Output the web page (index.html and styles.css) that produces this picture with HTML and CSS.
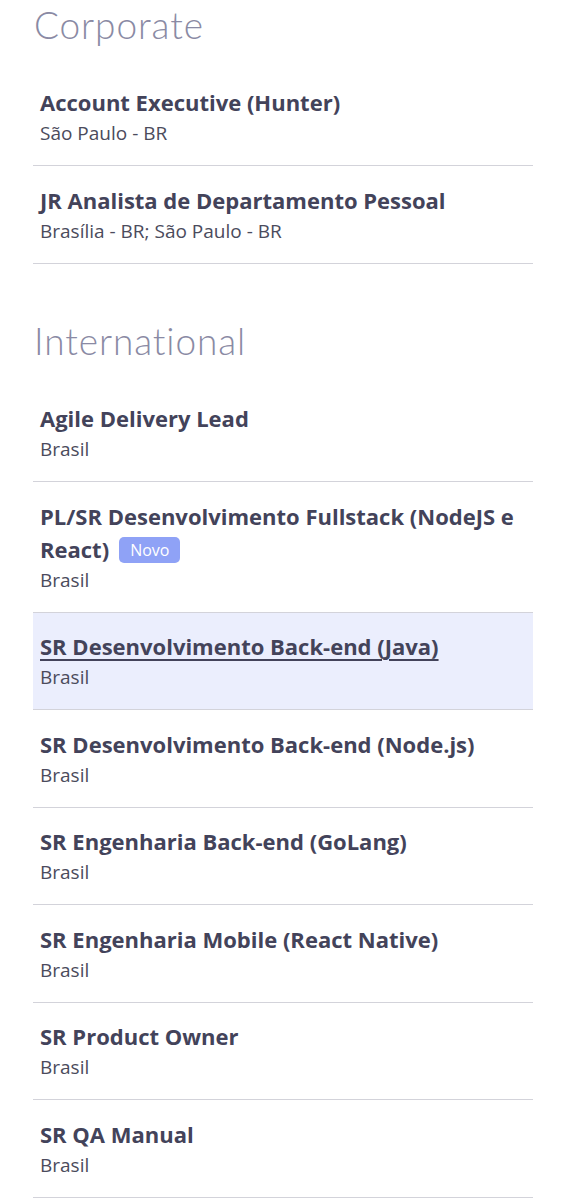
FILE: index.html
```html
<!DOCTYPE html>
<html lang="pt-BR">
<head>
<meta charset="utf-8">
<link rel="stylesheet" href="styles.css">
</head>
<body>
<main class="page">
  <section class="dept">
    <h2 class="dept-title">Corporate</h2>
    <ul class="jobs">
      <li class="job"><a class="job-title" href="#">Account Executive (Hunter)</a><span class="job-loc">São Paulo - BR</span></li>
      <li class="job"><a class="job-title" href="#">JR Analista de Departamento Pessoal</a><span class="job-loc">Brasília - BR; São Paulo - BR</span></li>
    </ul>
  </section>
  <section class="dept">
    <h2 class="dept-title">International</h2>
    <ul class="jobs">
      <li class="job"><a class="job-title" href="#">Agile Delivery Lead</a><span class="job-loc">Brasil</span></li>
      <li class="job"><a class="job-title" href="#">PL/SR Desenvolvimento Fullstack (NodeJS e React)<span class="badge">Novo</span></a><span class="job-loc">Brasil</span></li>
      <li class="job active"><a class="job-title" href="#">SR Desenvolvimento Back-end (Java)</a><span class="job-loc">Brasil</span></li>
      <li class="job"><a class="job-title" href="#">SR Desenvolvimento Back-end (Node.js)</a><span class="job-loc">Brasil</span></li>
      <li class="job"><a class="job-title" href="#">SR Engenharia Back-end (GoLang)</a><span class="job-loc">Brasil</span></li>
      <li class="job"><a class="job-title" href="#">SR Engenharia Mobile (React Native)</a><span class="job-loc">Brasil</span></li>
      <li class="job"><a class="job-title" href="#">SR Product Owner</a><span class="job-loc">Brasil</span></li>
      <li class="job"><a class="job-title" href="#">SR QA Manual</a><span class="job-loc">Brasil</span></li>
    </ul>
  </section>
</main>
</body>
</html>
```

FILE: styles.css
```css
html, body {
  margin: 0;
  padding: 0;
  background: #ffffff;
}
body {
  font-family: "Open Sans", "Liberation Sans", sans-serif;
}
.page {
  width: 500px;
  margin-left: 33px;
  padding-top: 0.5px;
}
.dept + .dept {
  margin-top: 53px;
}
.dept-title {
  margin: 0 0 20px 1px;
  font-family: "Lato", "Open Sans", sans-serif;
  font-weight: 300;
  font-size: 37px;
  line-height: 48px;
  color: #8a8aa4;
  letter-spacing: 0.9px;
}
.jobs {
  list-style: none;
  margin: 0;
  padding: 0;
}
.job {
  display: flex;
  flex-direction: column;
  padding: 17.5px 7px 18px;
  border-bottom: 1px solid #d3d3da;
}
.job.active {
  background: #ebeefd;
}
.job-title {
  font-size: 22px;
  line-height: 33px;
  font-weight: 700;
  color: #43435a;
  text-decoration: none;
}
.job.active .job-title {
  text-decoration: underline;
  text-decoration-thickness: 2px;
  text-underline-offset: 4px;
}
.job-loc {
  font-size: 19px;
  line-height: 28px;
  color: #4b4b5c;
}
.badge {
  display: inline-block;
  margin-left: 10px;
  padding: 1px 11px;
  background: #8fa2f6;
  color: #ffffff;
  font-size: 16px;
  font-weight: 400;
  line-height: 24px;
  border-radius: 5px;
  vertical-align: 2px;
}
```
